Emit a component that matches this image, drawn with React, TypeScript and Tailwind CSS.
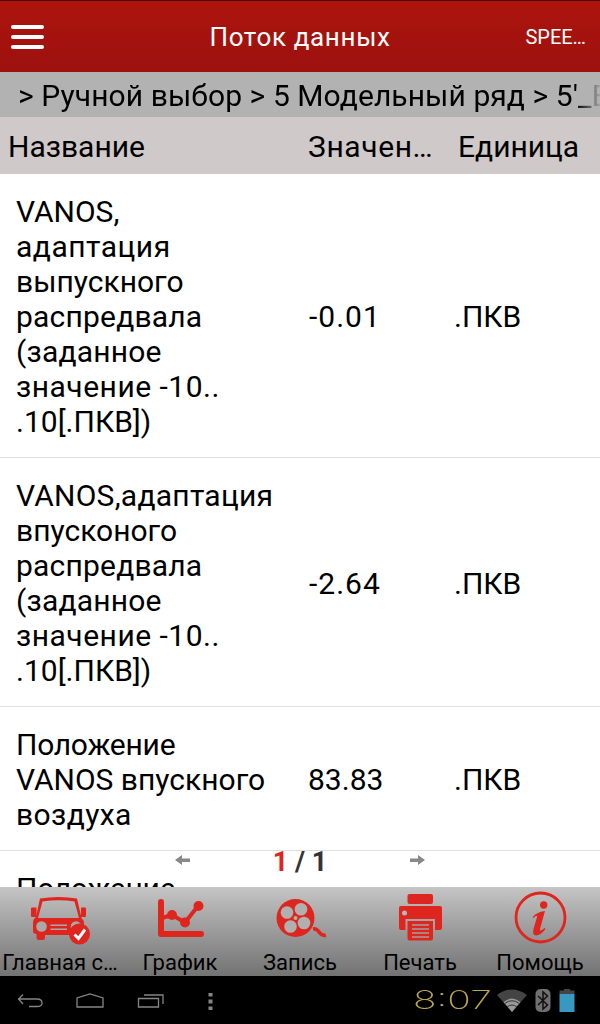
import React from 'react';

interface StreamItem {
  lines: { text: string; className?: string }[];
  value: string;
  unit: string;
}

interface TabProps {
  label: string;
  children: React.ReactNode;
}

const items: StreamItem[] = [
  {
    lines: [
      { text: 'VANOS,' },
      { text: 'адаптация', className: 'tracking-[0.5px]' },
      { text: 'выпускного' },
      { text: 'распредвала', className: 'tracking-[0.2px]' },
      { text: '(заданное', className: 'tracking-[0.2px]' },
      { text: 'значение -10..', className: 'tracking-[0.5px]' },
      { text: '.10[.ПКВ])' },
    ],
    value: '-0.01',
    unit: '.ПКВ',
  },
  {
    lines: [
      { text: 'VANOS,адаптация', className: 'tracking-[0.25px]' },
      { text: 'впусконого' },
      { text: 'распредвала', className: 'tracking-[0.2px]' },
      { text: '(заданное', className: 'tracking-[0.2px]' },
      { text: 'значение -10..', className: 'tracking-[0.5px]' },
      { text: '.10[.ПКВ])' },
    ],
    value: '-2.64',
    unit: '.ПКВ',
  },
  {
    lines: [
      { text: 'Положение', className: 'tracking-[-0.25px]' },
      { text: 'VANOS впускного' },
      { text: 'воздуха', className: 'tracking-[0.4px]' },
    ],
    value: '83.83',
    unit: '.ПКВ',
  },
  {
    lines: [{ text: 'Положение', className: 'tracking-[-0.25px]' }],
    value: '',
    unit: '',
  },
];

const Header: React.FC = () => (
  <header className="grid h-[72px] shrink-0 grid-cols-[120px_1fr_120px] items-center border-t border-[#4a0d0b] bg-linear-to-b from-[#ad140d] to-[#9c110e] text-white">
    <div className="ml-[11px] flex w-[33px] flex-col gap-[6px]">
      <span className="h-[4px] rounded-full bg-white" />
      <span className="h-[4px] rounded-full bg-white" />
      <span className="h-[4px] rounded-full bg-white" />
    </div>
    <h1 className="text-center text-[26px] leading-[30px] tracking-[0.65px]">Поток данных</h1>
    <span className="pt-px pr-[14px] text-right text-[20px] leading-6">SPEE…</span>
  </header>
);

const Breadcrumb: React.FC = () => (
  <nav className="h-[45px] shrink-0 bg-[#b2b2b2] pl-2">
    <div className="flex h-full items-center overflow-hidden text-[30px] leading-[35px] tracking-[0.08px] whitespace-pre mask-[linear-gradient(to_right,transparent_0,black_14px,black_568px,transparent_594px)]">
      <span className="-ml-[15px] w-[25px] shrink-0">и</span>
      <span className="pt-[2px]">&gt; Ручной выбор &gt; 5 Модельный ряд &gt; 5'_E60</span>
    </div>
  </nav>
);

const StreamRow: React.FC<{ item: StreamItem }> = ({ item }) => (
  <div className="grid shrink-0 grid-cols-[292px_146px_1fr] items-center border-b border-[#dfdfdf] pt-5 pb-[18px] pl-4">
    <div className="whitespace-nowrap">
      {item.lines.map((line, i) => (
        <div key={i} className={line.className}>{line.text}</div>
      ))}
    </div>
    <span className={item.value.startsWith('-') ? 'pl-px tracking-[1px]' : ''}>{item.value}</span>
    <span>{item.unit}</span>
  </div>
);

const Tab: React.FC<TabProps> = ({ label, children }) => (
  <button className="flex w-[120px] flex-col items-center text-[22px] leading-[26px] whitespace-nowrap">
    <svg width="60" height="60" viewBox="0 0 60 60" fill="#df261e">
      {children}
    </svg>
    <span className="mt-[3px]">{label}</span>
  </button>
);

const Toolbar: React.FC = () => (
  <div className="flex h-[89px] shrink-0 bg-linear-to-b from-[#c5c5c5] to-[#737373]">
    <Tab label="Главная с…">
      <path d="M10 11.500Q28.500 8.500 47 11.500L51.500 31Q54 33 54 37V46Q54 48 52 48H15V51Q15 53 13 53H9Q6.500 53 6.500 51V47Q3 47 3 44V36Q3 32 6 30ZM12.500 14.500L8 31H49L44.500 14.500Q28.500 12 12.500 14.500Z" fillRule="evenodd" />
      <path d="M2 20.500H6.500V30H2Q1 30 1 29V21.500Q1 20.500 2 20.500ZM51 20.500H55Q56 20.500 56 21.500V29Q56 30 55 30H51Z" />
      <g fill="#a9a9a9">
        <circle cx="11.500" cy="39.500" r="5.300" />
        <circle cx="46" cy="39.500" r="5.300" />
        <path d="M20.500 37.500H37V39H20.500ZM20.500 41.500H37V43H20.500Z" />
      </g>
      <circle cx="49.500" cy="47" r="10.500" />
      <path d="M44.500 47.500L48.500 51.500L55 42.500" fill="none" stroke="white" strokeWidth="3" />
    </Tab>
    <Tab label="График">
      <g fill="none" stroke="#df261e" strokeLinecap="round" strokeLinejoin="round">
        <path d="M11 15V47H51" strokeWidth="6" />
        <path d="M12 31L22 28L35 35.500L48 19" strokeWidth="4" />
      </g>
      <circle cx="22" cy="28" r="5" />
      <circle cx="35" cy="35.500" r="5" />
      <circle cx="48.500" cy="19" r="5" />
    </Tab>
    <Tab label="Запись">
      <path d="M43 42C50 40.500 48 49.500 56 48.500" fill="none" stroke="#df261e" strokeWidth="3.500" />
      <circle cx="25.500" cy="31" r="19" />
      <g fill="#b0b0b0">
        <circle cx="17" cy="25.500" r="6.300" />
        <circle cx="31" cy="22.300" r="6.300" />
        <circle cx="34" cy="36" r="6.300" />
        <circle cx="20.500" cy="39.500" r="6.300" />
        <circle cx="25.500" cy="31" r="2" />
      </g>
    </Tab>
    <Tab label="Печать">
      <rect x="17.500" y="7" width="25.500" height="10" rx="2" />
      <path d="M11 19H50Q52 19 52 21V41Q52 43 50 43H45V32H15.500V43H11Q9 43 9 41V21Q9 19 11 19Z" />
      <path d="M17.500 34H43V51.500Q43 53.500 41 53.500H19.500Q17.500 53.500 17.500 51.500Z" />
      <circle cx="14.500" cy="26" r="2.500" fill="#b8b8b8" />
      <path d="M22 38H39M22 42H39M22 46H39M22 50H39" stroke="#a0a0a0" strokeWidth="1.500" />
    </Tab>
    <Tab label="Помощь">
      <circle cx="30.500" cy="30.500" r="24.500" fill="none" stroke="#df261e" strokeWidth="2.800" />
      <circle cx="33.700" cy="18" r="3.700" />
      <path d="M22.500 30.500Q26 25 35 24L30 42Q29.500 45.500 34.500 41L35.500 42Q30.500 48.500 26 48.500Q22 48 23.500 42L27 30Q27.500 27 23.500 31Z" />
    </Tab>
  </div>
);

const SystemBar: React.FC = () => (
  <footer className="flex h-12 shrink-0 items-center justify-between bg-black">
    <svg width="240" height="48" viewBox="0 0 240 48" fill="none" stroke="#858585" strokeWidth="1.300">
      <path d="M23 18.500L18.500 23L23 28M18.500 23H37Q42 23 42 27Q42 30.500 37 30.500H29" />
      <path d="M77 31V22L90 18L103 22V31Z" />
      <path d="M138.500 22.500H158.500V31H138.500ZM144 19H163V28" />
      <path d="M208.500 17H212.500V20.500H208.500ZM208.500 23.500H212.500V27.500H208.500ZM208.500 30.500H212.500V34H208.500Z" fill="#858585" stroke="none" />
    </svg>
    <div className="flex items-center">
      <span className="w-[80px] origin-left scale-x-150 font-[Inter] text-[26px] leading-8 font-extralight text-[#b9a552]">8:07</span>
      <svg width="107" height="48" viewBox="493 0 107 48">
        <path d="M497 19Q512 8 527 19L512 36Z" fill="#444" />
        <path d="M503.500 26Q512 19 520.500 26L512 36Z" fill="#999" />
        <path d="M504.500 27.500Q512 22 519.500 27.500M507 31Q512 27 517 31" fill="none" stroke="#333" />
        <rect x="535.500" y="13" width="15" height="23" rx="5" fill="#707070" />
        <path d="M538 20L547.500 29L543 33V16L547.500 20L538 29" fill="none" stroke="#111" strokeWidth="1.500" />
        <path d="M564 13H570V14.500H574.500V18H559.500V14.500H564Z" fill="#444" />
        <path d="M559.500 18H574.500V36H559.500Z" fill="#3798c0" />
      </svg>
    </div>
  </footer>
);

const App: React.FC = () => {
  return (
    <div className="flex h-[1024px] w-[600px] flex-col overflow-hidden bg-white font-[Roboto,sans-serif] text-black">
      <Header />
      <Breadcrumb />
      <div className="grid h-[57px] shrink-0 grid-cols-[300px_150px_1fr] items-center bg-[#cfc9c9] pt-[2px] pl-2 text-[30px] leading-[35px]">
        <span>Название</span>
        <span className="tracking-[0.6px]">Значен…</span>
        <span>Единица</span>
      </div>
      <main className="relative flex min-h-0 flex-1 flex-col overflow-hidden text-[30px] leading-[35px]">
        {items.map((item, i) => (
          <StreamRow key={i} item={item} />
        ))}
        {/* pager floats over the list */}
        <div className="absolute top-[670px] left-[174px] flex w-[252px] items-center justify-between text-[27px] leading-[36px] font-bold">
          <svg width="16" height="12" viewBox="0 0 16 12" fill="#888" className="-mt-1">
            <path d="M1 6L8 1V4.500H16V8H8V11Z" />
          </svg>
          <span className="text-[#333]">
            <span className="text-[#df261e]">1</span> / 1
          </span>
          <svg width="16" height="12" viewBox="0 0 16 12" fill="#888" className="-mt-1">
            <path d="M15 6L8 1V4.500H0V8H8V11Z" />
          </svg>
        </div>
      </main>
      <Toolbar />
      <SystemBar />
    </div>
  );
};

export default App;
